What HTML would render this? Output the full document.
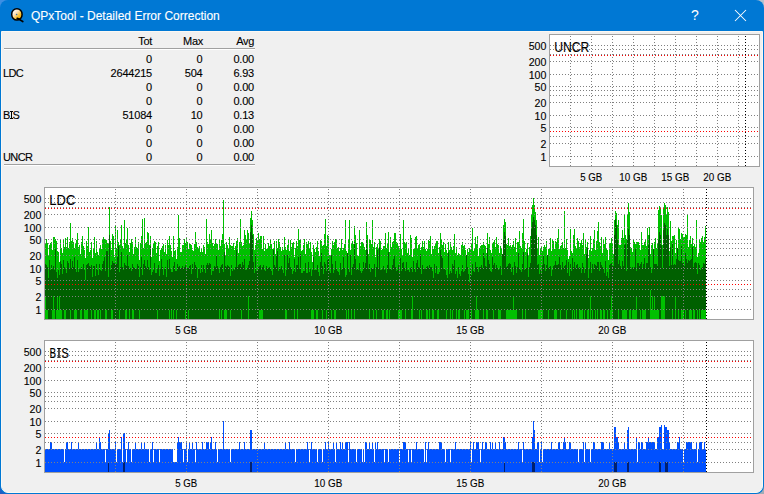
<!DOCTYPE html>
<html><head><meta charset="utf-8"><style>
html,body{margin:0;padding:0;width:764px;height:494px;overflow:hidden;background:#7f94a8;position:relative}
.cn{position:absolute;width:382px;height:247px}
#win{position:absolute;left:0;top:0;width:764px;height:494px;background:#0078d4;border-radius:8px;overflow:hidden;}
#client{position:absolute;left:1px;top:31px;width:762px;height:462px;background:#f0f0f0;border:1px solid #fbf8f3;box-sizing:border-box;border-radius:0 0 7px 7px;}
.tx{position:absolute;font-family:"Liberation Sans", sans-serif;font-size:11px;line-height:12px;color:#000;white-space:nowrap;-webkit-text-stroke:0.12px #000;}
.title{position:absolute;left:31px;top:8px;font-family:"Liberation Sans", sans-serif;font-size:12px;line-height:16px;color:#fff;white-space:nowrap;letter-spacing:0px;-webkit-text-stroke:0.12px #fff}
svg text{stroke:#000;stroke-width:0.12px}
.hl{position:absolute;left:4px;width:251px;height:1px;background:#a0a0a0;border-bottom:1px solid #fff}
</style></head><body>
<div class="cn" style="left:0;top:0;background:#3d8fe3"></div><div class="cn" style="left:382px;top:0;background:#b4c2cf"></div><div class="cn" style="left:0;top:247px;background:#1f5fc4"></div><div class="cn" style="left:382px;top:247px;background:#a3acb5"></div>
<div id="win">
<svg width="30" height="30" style="position:absolute;left:0;top:0">
<defs><linearGradient id="g" x1="0.2" y1="0.1" x2="0.85" y2="0.8"><stop offset="0" stop-color="#ffffff"/><stop offset="0.35" stop-color="#fbe3c0"/><stop offset="0.7" stop-color="#f9c23a"/><stop offset="1" stop-color="#f2b000"/></linearGradient></defs>
<ellipse cx="16.9" cy="14.4" rx="5.2" ry="5.7" fill="url(#g)" stroke="#000" stroke-width="1.5"/>
<circle cx="16.6" cy="14.5" r="0.8" fill="#3a6fa8"/>
<path d="M17.2 18.3 Q19.5 18.8 20.5 20.2 L22.8 21.6" stroke="#000" stroke-width="1.7" fill="none" stroke-linecap="round"/>
</svg>
<div class="title">QPxTool - Detailed Error Correction</div>
<div style="position:absolute;left:691px;top:7px;font-family:'Liberation Sans',sans-serif;font-size:14px;line-height:16px;color:#fff">?</div>
<svg width="14" height="14" style="position:absolute;left:734px;top:9px"><path d="M1 1L12 12M12 1L1 12" stroke="#fff" stroke-width="1.05"/></svg>
<div id="client"></div>
<div class="hl" style="top:48px"></div>
<div class="hl" style="top:164px"></div>
<span class="tx" style="right:612px;top:35px;letter-spacing:-0.3px">Tot</span>
<span class="tx" style="right:561px;top:35px;letter-spacing:-0.3px">Max</span>
<span class="tx" style="right:510px;top:35px;letter-spacing:-0.3px">Avg</span>
<span class="tx" style="right:612px;top:53px;letter-spacing:-0.2px">0</span>
<span class="tx" style="right:561.5px;top:53px;letter-spacing:-0.2px">0</span>
<span class="tx" style="right:510px;top:53px;letter-spacing:-0.2px">0.00</span>
<span class="tx" style="left:3px;top:67px;letter-spacing:-0.6px">LDC</span>
<span class="tx" style="right:612px;top:67px;letter-spacing:-0.2px">2644215</span>
<span class="tx" style="right:561.5px;top:67px;letter-spacing:-0.2px">504</span>
<span class="tx" style="right:510px;top:67px;letter-spacing:-0.2px">6.93</span>
<span class="tx" style="right:612px;top:81px;letter-spacing:-0.2px">0</span>
<span class="tx" style="right:561.5px;top:81px;letter-spacing:-0.2px">0</span>
<span class="tx" style="right:510px;top:81px;letter-spacing:-0.2px">0.00</span>
<span class="tx" style="right:612px;top:95px;letter-spacing:-0.2px">0</span>
<span class="tx" style="right:561.5px;top:95px;letter-spacing:-0.2px">0</span>
<span class="tx" style="right:510px;top:95px;letter-spacing:-0.2px">0.00</span>
<span class="tx" style="left:3px;top:109px;letter-spacing:0px">B</span>
<span class="tx" style="left:12.6px;top:109px;letter-spacing:0px">S</span>
<div style="position:absolute;left:10px;top:111px;width:3px;height:1px;background:#000"></div>
<div style="position:absolute;left:11px;top:111px;width:1.2px;height:8px;background:#000"></div>
<div style="position:absolute;left:10px;top:118px;width:3px;height:1px;background:#000"></div>
<span class="tx" style="right:612px;top:109px;letter-spacing:-0.2px">51084</span>
<span class="tx" style="right:561.5px;top:109px;letter-spacing:-0.2px">10</span>
<span class="tx" style="right:510px;top:109px;letter-spacing:-0.2px">0.13</span>
<span class="tx" style="right:612px;top:123px;letter-spacing:-0.2px">0</span>
<span class="tx" style="right:561.5px;top:123px;letter-spacing:-0.2px">0</span>
<span class="tx" style="right:510px;top:123px;letter-spacing:-0.2px">0.00</span>
<span class="tx" style="right:612px;top:137px;letter-spacing:-0.2px">0</span>
<span class="tx" style="right:561.5px;top:137px;letter-spacing:-0.2px">0</span>
<span class="tx" style="right:510px;top:137px;letter-spacing:-0.2px">0.00</span>
<span class="tx" style="left:3px;top:151px;letter-spacing:-0.6px">UNCR</span>
<span class="tx" style="right:612px;top:151px;letter-spacing:-0.2px">0</span>
<span class="tx" style="right:561.5px;top:151px;letter-spacing:-0.2px">0</span>
<span class="tx" style="right:510px;top:151px;letter-spacing:-0.2px">0.00</span>
<svg width="764" height="494" style="position:absolute;left:0;top:0" font-family='"Liberation Sans", sans-serif' font-size="11" shape-rendering="crispEdges">
<rect x="549.5" y="34.5" width="210" height="132" fill="#fff" stroke="#a0a0a0"/>
<line x1="550" y1="45.5" x2="759" y2="45.5" stroke="#808080" stroke-dasharray="1 2"/>
<line x1="550" y1="49.5" x2="759" y2="49.5" stroke="#808080" stroke-dasharray="1 2"/>
<line x1="550" y1="54.5" x2="759" y2="54.5" stroke="#808080" stroke-dasharray="1 2"/>
<line x1="550" y1="61.5" x2="759" y2="61.5" stroke="#808080" stroke-dasharray="1 2"/>
<line x1="550" y1="74.5" x2="759" y2="74.5" stroke="#808080" stroke-dasharray="1 2"/>
<line x1="550" y1="86.5" x2="759" y2="86.5" stroke="#808080" stroke-dasharray="1 2"/>
<line x1="550" y1="90.5" x2="759" y2="90.5" stroke="#808080" stroke-dasharray="1 2"/>
<line x1="550" y1="95.5" x2="759" y2="95.5" stroke="#808080" stroke-dasharray="1 2"/>
<line x1="550" y1="102.5" x2="759" y2="102.5" stroke="#808080" stroke-dasharray="1 2"/>
<line x1="550" y1="115.5" x2="759" y2="115.5" stroke="#808080" stroke-dasharray="1 2"/>
<line x1="550" y1="127.5" x2="759" y2="127.5" stroke="#808080" stroke-dasharray="1 2"/>
<line x1="550" y1="136.5" x2="759" y2="136.5" stroke="#808080" stroke-dasharray="1 2"/>
<line x1="550" y1="143.5" x2="759" y2="143.5" stroke="#808080" stroke-dasharray="1 2"/>
<line x1="550" y1="156.5" x2="759" y2="156.5" stroke="#808080" stroke-dasharray="1 2"/>
<line x1="570.5" y1="36" x2="570.5" y2="166" stroke="#808080" stroke-dasharray="1 2"/>
<line x1="591.5" y1="36" x2="591.5" y2="166" stroke="#808080" stroke-dasharray="1 2"/>
<line x1="612.5" y1="36" x2="612.5" y2="166" stroke="#808080" stroke-dasharray="1 2"/>
<line x1="633.5" y1="36" x2="633.5" y2="166" stroke="#808080" stroke-dasharray="1 2"/>
<line x1="654.5" y1="36" x2="654.5" y2="166" stroke="#808080" stroke-dasharray="1 2"/>
<line x1="675.5" y1="36" x2="675.5" y2="166" stroke="#808080" stroke-dasharray="1 2"/>
<line x1="696.5" y1="36" x2="696.5" y2="166" stroke="#808080" stroke-dasharray="1 2"/>
<line x1="717.5" y1="36" x2="717.5" y2="166" stroke="#808080" stroke-dasharray="1 2"/>
<line x1="738.5" y1="36" x2="738.5" y2="166" stroke="#808080" stroke-dasharray="1 2"/>
<line x1="550" y1="55.5" x2="759" y2="55.5" stroke="#ff0000" stroke-dasharray="1 2"/>
<line x1="550" y1="131.5" x2="759" y2="131.5" stroke="#ff0000" stroke-dasharray="1 2"/>
<line x1="745.5" y1="36" x2="745.5" y2="166" stroke="#000" stroke-dasharray="1 2"/>
<text x="546.4" y="50" text-anchor="end" textLength="17.7" lengthAdjust="spacingAndGlyphs">500</text>
<text x="546.4" y="66" text-anchor="end" textLength="17.7" lengthAdjust="spacingAndGlyphs">200</text>
<text x="546.4" y="79" text-anchor="end" textLength="17.7" lengthAdjust="spacingAndGlyphs">100</text>
<text x="546.4" y="91" text-anchor="end" textLength="11.8" lengthAdjust="spacingAndGlyphs">50</text>
<text x="546.4" y="107" text-anchor="end" textLength="11.8" lengthAdjust="spacingAndGlyphs">20</text>
<text x="546.4" y="120" text-anchor="end" textLength="11.8" lengthAdjust="spacingAndGlyphs">10</text>
<text x="546.4" y="132" text-anchor="end" textLength="5.9" lengthAdjust="spacingAndGlyphs">5</text>
<text x="546.4" y="148" text-anchor="end" textLength="5.9" lengthAdjust="spacingAndGlyphs">2</text>
<text x="546.4" y="161" text-anchor="end" textLength="5.9" lengthAdjust="spacingAndGlyphs">1</text>
<text x="554.3" y="51.8" font-size="14" textLength="35" lengthAdjust="spacingAndGlyphs">UNCR</text>
<text x="591.3" y="181" text-anchor="middle" textLength="22" lengthAdjust="spacingAndGlyphs">5 GB</text>
<text x="633.3" y="181" text-anchor="middle" textLength="28" lengthAdjust="spacingAndGlyphs">10 GB</text>
<text x="675.3" y="181" text-anchor="middle" textLength="28" lengthAdjust="spacingAndGlyphs">15 GB</text>
<text x="717.3" y="181" text-anchor="middle" textLength="28" lengthAdjust="spacingAndGlyphs">20 GB</text>
<rect x="44.5" y="187.5" width="709" height="132" fill="#fff" stroke="#a0a0a0"/>
<path fill="#00c000" d="M45 243h1v76h-1zM46 239h1v80h-1zM47 243h1v76h-1zM48 255h1v64h-1zM49 245h1v74h-1zM50 243h1v76h-1zM51 242h1v77h-1zM52 250h1v69h-1zM53 237h1v82h-1zM54 237h1v82h-1zM55 239h1v80h-1zM56 241h1v78h-1zM57 251h1v68h-1zM58 252h1v67h-1zM59 262h1v57h-1zM60 239h1v80h-1zM61 248h1v71h-1zM62 253h1v66h-1zM63 239h1v80h-1zM64 247h1v72h-1zM65 238h1v81h-1zM66 247h1v72h-1zM67 237h1v82h-1zM68 248h1v71h-1zM69 242h1v77h-1zM70 223h1v96h-1zM71 241h1v78h-1zM72 238h1v81h-1zM73 242h1v77h-1zM74 248h1v71h-1zM75 243h1v76h-1zM76 240h1v79h-1zM77 233h1v86h-1zM78 247h1v72h-1zM79 245h1v74h-1zM80 254h1v65h-1zM81 242h1v77h-1zM82 236h1v83h-1zM83 246h1v73h-1zM84 250h1v69h-1zM85 258h1v61h-1zM86 241h1v78h-1zM87 246h1v73h-1zM88 227h1v92h-1zM89 252h1v67h-1zM90 250h1v69h-1zM91 242h1v77h-1zM92 258h1v61h-1zM93 249h1v70h-1zM94 237h1v82h-1zM95 253h1v66h-1zM96 241h1v78h-1zM97 252h1v67h-1zM98 255h1v64h-1zM99 248h1v71h-1zM100 245h1v74h-1zM101 249h1v70h-1zM102 239h1v80h-1zM103 237h1v82h-1zM104 239h1v80h-1zM105 240h1v79h-1zM106 240h1v79h-1zM107 243h1v76h-1zM108 243h1v76h-1zM109 207h1v112h-1zM110 241h1v78h-1zM111 250h1v69h-1zM112 234h1v85h-1zM113 236h1v83h-1zM114 257h1v62h-1zM115 225h1v94h-1zM116 248h1v71h-1zM117 230h1v89h-1zM118 242h1v77h-1zM119 245h1v74h-1zM120 240h1v79h-1zM121 225h1v94h-1zM122 246h1v73h-1zM123 249h1v70h-1zM124 220h1v99h-1zM125 243h1v76h-1zM126 239h1v80h-1zM127 228h1v91h-1zM128 245h1v74h-1zM129 252h1v67h-1zM130 243h1v76h-1zM131 239h1v80h-1zM132 242h1v77h-1zM133 254h1v65h-1zM134 247h1v72h-1zM135 237h1v82h-1zM136 247h1v72h-1zM137 248h1v71h-1zM138 242h1v77h-1zM139 260h1v59h-1zM140 243h1v76h-1zM141 236h1v83h-1zM142 219h1v100h-1zM143 248h1v71h-1zM144 218h1v101h-1zM145 243h1v76h-1zM146 242h1v77h-1zM147 232h1v87h-1zM148 233h1v86h-1zM149 245h1v74h-1zM150 236h1v83h-1zM151 257h1v62h-1zM152 248h1v71h-1zM153 243h1v76h-1zM154 241h1v78h-1zM155 242h1v77h-1zM156 253h1v66h-1zM157 246h1v73h-1zM158 242h1v77h-1zM159 261h1v58h-1zM160 250h1v69h-1zM161 248h1v71h-1zM162 246h1v73h-1zM163 244h1v75h-1zM164 252h1v67h-1zM165 245h1v74h-1zM166 254h1v65h-1zM167 240h1v79h-1zM168 245h1v74h-1zM169 236h1v83h-1zM170 245h1v74h-1zM171 251h1v68h-1zM172 257h1v62h-1zM173 236h1v83h-1zM174 251h1v68h-1zM175 250h1v69h-1zM176 259h1v60h-1zM177 247h1v72h-1zM178 215h1v104h-1zM179 238h1v81h-1zM180 252h1v67h-1zM181 252h1v67h-1zM182 245h1v74h-1zM183 245h1v74h-1zM184 239h1v80h-1zM185 243h1v76h-1zM186 237h1v82h-1zM187 242h1v77h-1zM188 249h1v70h-1zM189 244h1v75h-1zM190 244h1v75h-1zM191 245h1v74h-1zM192 250h1v69h-1zM193 251h1v68h-1zM194 244h1v75h-1zM195 232h1v87h-1zM196 242h1v77h-1zM197 247h1v72h-1zM198 248h1v71h-1zM199 246h1v73h-1zM200 252h1v67h-1zM201 249h1v70h-1zM202 252h1v67h-1zM203 245h1v74h-1zM204 247h1v72h-1zM205 254h1v65h-1zM206 219h1v100h-1zM207 242h1v77h-1zM208 244h1v75h-1zM209 234h1v85h-1zM210 240h1v79h-1zM211 230h1v89h-1zM212 243h1v76h-1zM213 246h1v73h-1zM214 244h1v75h-1zM215 239h1v80h-1zM216 244h1v75h-1zM217 244h1v75h-1zM218 250h1v69h-1zM219 240h1v79h-1zM220 246h1v73h-1zM221 240h1v79h-1zM222 234h1v85h-1zM223 200h1v119h-1zM224 244h1v75h-1zM225 256h1v63h-1zM226 242h1v77h-1zM227 245h1v74h-1zM228 248h1v71h-1zM229 237h1v82h-1zM230 245h1v74h-1zM231 246h1v73h-1zM232 246h1v73h-1zM233 243h1v76h-1zM234 250h1v69h-1zM235 246h1v73h-1zM236 241h1v78h-1zM237 238h1v81h-1zM238 253h1v66h-1zM239 242h1v77h-1zM240 219h1v100h-1zM241 242h1v77h-1zM242 246h1v73h-1zM243 245h1v74h-1zM244 230h1v89h-1zM245 235h1v84h-1zM246 240h1v79h-1zM247 230h1v89h-1zM248 233h1v86h-1zM249 243h1v76h-1zM250 218h1v101h-1zM251 211h1v108h-1zM252 220h1v99h-1zM253 234h1v85h-1zM254 250h1v69h-1zM255 245h1v74h-1zM256 238h1v81h-1zM257 241h1v78h-1zM258 233h1v86h-1zM259 239h1v80h-1zM260 236h1v83h-1zM261 236h1v83h-1zM262 249h1v70h-1zM263 236h1v83h-1zM264 251h1v68h-1zM265 244h1v75h-1zM266 249h1v70h-1zM267 249h1v70h-1zM268 243h1v76h-1zM269 246h1v73h-1zM270 239h1v80h-1zM271 244h1v75h-1zM272 249h1v70h-1zM273 249h1v70h-1zM274 241h1v78h-1zM275 254h1v65h-1zM276 241h1v78h-1zM277 248h1v71h-1zM278 239h1v80h-1zM279 242h1v77h-1zM280 247h1v72h-1zM281 251h1v68h-1zM282 247h1v72h-1zM283 250h1v69h-1zM284 237h1v82h-1zM285 247h1v72h-1zM286 250h1v69h-1zM287 245h1v74h-1zM288 239h1v80h-1zM289 251h1v68h-1zM290 240h1v79h-1zM291 247h1v72h-1zM292 243h1v76h-1zM293 242h1v77h-1zM294 257h1v62h-1zM295 248h1v71h-1zM296 241h1v78h-1zM297 246h1v73h-1zM298 229h1v90h-1zM299 240h1v79h-1zM300 239h1v80h-1zM301 251h1v68h-1zM302 250h1v69h-1zM303 245h1v74h-1zM304 239h1v80h-1zM305 254h1v65h-1zM306 242h1v77h-1zM307 244h1v75h-1zM308 241h1v78h-1zM309 249h1v70h-1zM310 242h1v77h-1zM311 252h1v67h-1zM312 262h1v57h-1zM313 245h1v74h-1zM314 249h1v70h-1zM315 252h1v67h-1zM316 247h1v72h-1zM317 241h1v78h-1zM318 251h1v68h-1zM319 256h1v63h-1zM320 240h1v79h-1zM321 241h1v78h-1zM322 246h1v73h-1zM323 245h1v74h-1zM324 234h1v85h-1zM325 219h1v100h-1zM326 246h1v73h-1zM327 235h1v84h-1zM328 236h1v83h-1zM329 255h1v64h-1zM330 255h1v64h-1zM331 249h1v70h-1zM332 241h1v78h-1zM333 245h1v74h-1zM334 242h1v77h-1zM335 239h1v80h-1zM336 239h1v80h-1zM337 248h1v71h-1zM338 247h1v72h-1zM339 251h1v68h-1zM340 248h1v71h-1zM341 239h1v80h-1zM342 250h1v69h-1zM343 248h1v71h-1zM344 244h1v75h-1zM345 220h1v99h-1zM346 251h1v68h-1zM347 253h1v66h-1zM348 239h1v80h-1zM349 220h1v99h-1zM350 250h1v69h-1zM351 243h1v76h-1zM352 241h1v78h-1zM353 244h1v75h-1zM354 226h1v93h-1zM355 235h1v84h-1zM356 243h1v76h-1zM357 255h1v64h-1zM358 256h1v63h-1zM359 230h1v89h-1zM360 246h1v73h-1zM361 242h1v77h-1zM362 242h1v77h-1zM363 244h1v75h-1zM364 247h1v72h-1zM365 250h1v69h-1zM366 222h1v97h-1zM367 235h1v84h-1zM368 254h1v65h-1zM369 240h1v79h-1zM370 240h1v79h-1zM371 244h1v75h-1zM372 220h1v99h-1zM373 247h1v72h-1zM374 242h1v77h-1zM375 257h1v62h-1zM376 247h1v72h-1zM377 244h1v75h-1zM378 249h1v70h-1zM379 239h1v80h-1zM380 241h1v78h-1zM381 250h1v69h-1zM382 249h1v70h-1zM383 246h1v73h-1zM384 246h1v73h-1zM385 233h1v86h-1zM386 248h1v71h-1zM387 243h1v76h-1zM388 232h1v87h-1zM389 252h1v67h-1zM390 237h1v82h-1zM391 247h1v72h-1zM392 242h1v77h-1zM393 241h1v78h-1zM394 233h1v86h-1zM395 233h1v86h-1zM396 242h1v77h-1zM397 243h1v76h-1zM398 246h1v73h-1zM399 248h1v71h-1zM400 234h1v85h-1zM401 249h1v70h-1zM402 255h1v64h-1zM403 220h1v99h-1zM404 242h1v77h-1zM405 244h1v75h-1zM406 242h1v77h-1zM407 253h1v66h-1zM408 249h1v70h-1zM409 255h1v64h-1zM410 235h1v84h-1zM411 238h1v81h-1zM412 257h1v62h-1zM413 249h1v70h-1zM414 249h1v70h-1zM415 237h1v82h-1zM416 236h1v83h-1zM417 249h1v70h-1zM418 245h1v74h-1zM419 244h1v75h-1zM420 250h1v69h-1zM421 247h1v72h-1zM422 241h1v78h-1zM423 247h1v72h-1zM424 241h1v78h-1zM425 249h1v70h-1zM426 251h1v68h-1zM427 249h1v70h-1zM428 240h1v79h-1zM429 241h1v78h-1zM430 236h1v83h-1zM431 254h1v65h-1zM432 246h1v73h-1zM433 249h1v70h-1zM434 246h1v73h-1zM435 244h1v75h-1zM436 241h1v78h-1zM437 241h1v78h-1zM438 253h1v66h-1zM439 247h1v72h-1zM440 233h1v86h-1zM441 240h1v79h-1zM442 245h1v74h-1zM443 242h1v77h-1zM444 252h1v67h-1zM445 244h1v75h-1zM446 250h1v69h-1zM447 253h1v66h-1zM448 242h1v77h-1zM449 250h1v69h-1zM450 242h1v77h-1zM451 247h1v72h-1zM452 250h1v69h-1zM453 246h1v73h-1zM454 234h1v85h-1zM455 253h1v66h-1zM456 247h1v72h-1zM457 255h1v64h-1zM458 253h1v66h-1zM459 254h1v65h-1zM460 255h1v64h-1zM461 245h1v74h-1zM462 242h1v77h-1zM463 246h1v73h-1zM464 245h1v74h-1zM465 250h1v69h-1zM466 255h1v64h-1zM467 249h1v70h-1zM468 252h1v67h-1zM469 248h1v71h-1zM470 250h1v69h-1zM471 244h1v75h-1zM472 228h1v91h-1zM473 251h1v68h-1zM474 249h1v70h-1zM475 237h1v82h-1zM476 244h1v75h-1zM477 236h1v83h-1zM478 256h1v63h-1zM479 248h1v71h-1zM480 246h1v73h-1zM481 245h1v74h-1zM482 245h1v74h-1zM483 242h1v77h-1zM484 245h1v74h-1zM485 246h1v73h-1zM486 253h1v66h-1zM487 233h1v86h-1zM488 244h1v75h-1zM489 237h1v82h-1zM490 250h1v69h-1zM491 253h1v66h-1zM492 243h1v76h-1zM493 242h1v77h-1zM494 240h1v79h-1zM495 247h1v72h-1zM496 237h1v82h-1zM497 244h1v75h-1zM498 245h1v74h-1zM499 253h1v66h-1zM500 246h1v73h-1zM501 248h1v71h-1zM502 254h1v65h-1zM503 225h1v94h-1zM504 219h1v100h-1zM505 222h1v97h-1zM506 244h1v75h-1zM507 245h1v74h-1zM508 238h1v81h-1zM509 246h1v73h-1zM510 245h1v74h-1zM511 247h1v72h-1zM512 245h1v74h-1zM513 241h1v78h-1zM514 247h1v72h-1zM515 238h1v81h-1zM516 252h1v67h-1zM517 242h1v77h-1zM518 242h1v77h-1zM519 231h1v88h-1zM520 246h1v73h-1zM521 248h1v71h-1zM522 233h1v86h-1zM523 219h1v100h-1zM524 241h1v78h-1zM525 252h1v67h-1zM526 249h1v70h-1zM527 243h1v76h-1zM528 255h1v64h-1zM529 247h1v72h-1zM530 236h1v83h-1zM531 215h1v104h-1zM532 205h1v114h-1zM533 198h1v121h-1zM534 205h1v114h-1zM535 212h1v107h-1zM536 220h1v99h-1zM537 248h1v71h-1zM538 237h1v82h-1zM539 255h1v64h-1zM540 248h1v71h-1zM541 247h1v72h-1zM542 251h1v68h-1zM543 247h1v72h-1zM544 245h1v74h-1zM545 247h1v72h-1zM546 241h1v78h-1zM547 255h1v64h-1zM548 249h1v70h-1zM549 248h1v71h-1zM550 238h1v81h-1zM551 251h1v68h-1zM552 239h1v80h-1zM553 241h1v78h-1zM554 249h1v70h-1zM555 241h1v78h-1zM556 242h1v77h-1zM557 238h1v81h-1zM558 229h1v90h-1zM559 249h1v70h-1zM560 246h1v73h-1zM561 245h1v74h-1zM562 242h1v77h-1zM563 248h1v71h-1zM564 211h1v108h-1zM565 248h1v71h-1zM566 239h1v80h-1zM567 250h1v69h-1zM568 259h1v60h-1zM569 256h1v63h-1zM570 229h1v90h-1zM571 251h1v68h-1zM572 253h1v66h-1zM573 235h1v84h-1zM574 229h1v90h-1zM575 246h1v73h-1zM576 249h1v70h-1zM577 238h1v81h-1zM578 241h1v78h-1zM579 247h1v72h-1zM580 243h1v76h-1zM581 240h1v79h-1zM582 245h1v74h-1zM583 233h1v86h-1zM584 254h1v65h-1zM585 239h1v80h-1zM586 247h1v72h-1zM587 242h1v77h-1zM588 258h1v61h-1zM589 250h1v69h-1zM590 236h1v83h-1zM591 251h1v68h-1zM592 248h1v71h-1zM593 239h1v80h-1zM594 230h1v89h-1zM595 250h1v69h-1zM596 241h1v78h-1zM597 231h1v88h-1zM598 222h1v97h-1zM599 242h1v77h-1zM600 246h1v73h-1zM601 237h1v82h-1zM602 253h1v66h-1zM603 240h1v79h-1zM604 244h1v75h-1zM605 237h1v82h-1zM606 248h1v71h-1zM607 250h1v69h-1zM608 260h1v59h-1zM609 243h1v76h-1zM610 243h1v76h-1zM611 238h1v81h-1zM612 243h1v76h-1zM613 254h1v65h-1zM614 220h1v99h-1zM615 211h1v108h-1zM616 213h1v106h-1zM617 225h1v94h-1zM618 220h1v99h-1zM619 245h1v74h-1zM620 245h1v74h-1zM621 238h1v81h-1zM622 230h1v89h-1zM623 238h1v81h-1zM624 215h1v104h-1zM625 235h1v84h-1zM626 239h1v80h-1zM627 215h1v104h-1zM628 203h1v116h-1zM629 212h1v107h-1zM630 247h1v72h-1zM631 248h1v71h-1zM632 252h1v67h-1zM633 240h1v79h-1zM634 242h1v77h-1zM635 244h1v75h-1zM636 242h1v77h-1zM637 242h1v77h-1zM638 242h1v77h-1zM639 245h1v74h-1zM640 250h1v69h-1zM641 232h1v87h-1zM642 245h1v74h-1zM643 245h1v74h-1zM644 242h1v77h-1zM645 239h1v80h-1zM646 246h1v73h-1zM647 228h1v91h-1zM648 235h1v84h-1zM649 227h1v92h-1zM650 254h1v65h-1zM651 245h1v74h-1zM652 243h1v76h-1zM653 249h1v70h-1zM654 242h1v77h-1zM655 238h1v81h-1zM656 248h1v71h-1zM657 244h1v75h-1zM658 210h1v109h-1zM659 206h1v113h-1zM660 208h1v111h-1zM661 215h1v104h-1zM662 245h1v74h-1zM663 207h1v112h-1zM664 203h1v116h-1zM665 205h1v114h-1zM666 215h1v104h-1zM667 207h1v112h-1zM668 212h1v107h-1zM669 251h1v68h-1zM670 221h1v98h-1zM671 241h1v78h-1zM672 236h1v83h-1zM673 236h1v83h-1zM674 235h1v84h-1zM675 253h1v66h-1zM676 240h1v79h-1zM677 248h1v71h-1zM678 227h1v92h-1zM679 229h1v90h-1zM680 239h1v80h-1zM681 233h1v86h-1zM682 234h1v85h-1zM683 238h1v81h-1zM684 237h1v82h-1zM685 234h1v85h-1zM686 235h1v84h-1zM687 215h1v104h-1zM688 247h1v72h-1zM689 240h1v79h-1zM690 236h1v83h-1zM691 244h1v75h-1zM692 238h1v81h-1zM693 246h1v73h-1zM694 244h1v75h-1zM695 247h1v72h-1zM696 220h1v99h-1zM697 257h1v62h-1zM698 253h1v66h-1zM699 239h1v80h-1zM700 242h1v77h-1zM701 238h1v81h-1zM702 236h1v83h-1zM703 242h1v77h-1zM704 237h1v82h-1zM705 226h1v93h-1z"/>
<path fill="#006000" d="M45 264h1v55h-1zM46 265h1v54h-1zM47 267h1v52h-1zM48 278h1v41h-1zM49 260h1v59h-1zM50 270h1v49h-1zM51 265h1v54h-1zM52 269h1v50h-1zM53 266h1v53h-1zM54 270h1v49h-1zM55 249h1v70h-1zM56 272h1v47h-1zM57 278h1v41h-1zM58 270h1v49h-1zM59 275h1v44h-1zM60 261h1v58h-1zM61 264h1v55h-1zM62 274h1v45h-1zM63 260h1v59h-1zM64 267h1v52h-1zM65 269h1v50h-1zM66 273h1v46h-1zM67 261h1v58h-1zM68 263h1v56h-1zM69 268h1v51h-1zM70 259h1v60h-1zM71 268h1v51h-1zM72 261h1v58h-1zM73 267h1v52h-1zM74 257h1v62h-1zM75 268h1v51h-1zM76 272h1v47h-1zM77 260h1v59h-1zM78 272h1v47h-1zM79 269h1v50h-1zM80 269h1v50h-1zM81 267h1v52h-1zM82 269h1v50h-1zM83 264h1v55h-1zM84 270h1v49h-1zM85 280h1v39h-1zM86 265h1v54h-1zM87 264h1v55h-1zM88 263h1v56h-1zM89 266h1v53h-1zM90 267h1v52h-1zM91 265h1v54h-1zM92 277h1v42h-1zM93 266h1v53h-1zM94 266h1v53h-1zM95 276h1v43h-1zM96 264h1v55h-1zM97 270h1v49h-1zM98 275h1v44h-1zM99 264h1v55h-1zM100 270h1v49h-1zM101 271h1v48h-1zM102 264h1v55h-1zM103 261h1v58h-1zM104 257h1v62h-1zM105 271h1v48h-1zM106 251h1v68h-1zM107 251h1v68h-1zM108 277h1v42h-1zM109 235h1v84h-1zM110 270h1v49h-1zM111 265h1v54h-1zM112 261h1v58h-1zM113 263h1v56h-1zM114 263h1v56h-1zM115 265h1v54h-1zM116 264h1v55h-1zM117 257h1v62h-1zM118 246h1v73h-1zM119 272h1v47h-1zM120 267h1v52h-1zM121 252h1v67h-1zM122 267h1v52h-1zM123 270h1v49h-1zM124 263h1v56h-1zM125 265h1v54h-1zM126 266h1v53h-1zM127 255h1v64h-1zM128 266h1v53h-1zM129 268h1v51h-1zM130 268h1v51h-1zM131 271h1v48h-1zM132 264h1v55h-1zM133 267h1v52h-1zM134 268h1v51h-1zM135 269h1v50h-1zM136 269h1v50h-1zM137 264h1v55h-1zM138 266h1v53h-1zM139 277h1v42h-1zM140 267h1v52h-1zM141 257h1v62h-1zM142 275h1v44h-1zM143 264h1v55h-1zM144 260h1v59h-1zM145 266h1v53h-1zM146 268h1v51h-1zM147 260h1v59h-1zM148 267h1v52h-1zM149 270h1v49h-1zM150 246h1v73h-1zM151 275h1v44h-1zM152 272h1v47h-1zM153 270h1v49h-1zM154 263h1v56h-1zM155 273h1v46h-1zM156 273h1v46h-1zM157 269h1v50h-1zM158 265h1v54h-1zM159 276h1v43h-1zM160 269h1v50h-1zM161 259h1v60h-1zM162 267h1v52h-1zM163 275h1v44h-1zM164 269h1v50h-1zM165 267h1v52h-1zM166 277h1v42h-1zM167 260h1v59h-1zM168 269h1v50h-1zM169 259h1v60h-1zM170 269h1v50h-1zM171 272h1v47h-1zM172 272h1v47h-1zM173 266h1v53h-1zM174 262h1v57h-1zM175 271h1v48h-1zM176 271h1v48h-1zM177 264h1v55h-1zM178 267h1v52h-1zM179 266h1v53h-1zM180 269h1v50h-1zM181 268h1v51h-1zM182 266h1v53h-1zM183 268h1v51h-1zM184 267h1v52h-1zM185 265h1v54h-1zM186 270h1v49h-1zM187 268h1v51h-1zM188 268h1v51h-1zM189 266h1v53h-1zM190 265h1v54h-1zM191 274h1v45h-1zM192 264h1v55h-1zM193 269h1v50h-1zM194 262h1v57h-1zM195 265h1v54h-1zM196 267h1v52h-1zM197 278h1v41h-1zM198 268h1v51h-1zM199 269h1v50h-1zM200 273h1v46h-1zM201 265h1v54h-1zM202 272h1v47h-1zM203 265h1v54h-1zM204 269h1v50h-1zM205 273h1v46h-1zM206 265h1v54h-1zM207 263h1v56h-1zM208 265h1v54h-1zM209 263h1v56h-1zM210 264h1v55h-1zM211 275h1v44h-1zM212 271h1v48h-1zM213 271h1v48h-1zM214 266h1v53h-1zM215 267h1v52h-1zM216 256h1v63h-1zM217 266h1v53h-1zM218 269h1v50h-1zM219 273h1v46h-1zM220 267h1v52h-1zM221 265h1v54h-1zM222 264h1v55h-1zM223 272h1v47h-1zM224 252h1v67h-1zM225 266h1v53h-1zM226 267h1v52h-1zM227 265h1v54h-1zM228 266h1v53h-1zM229 267h1v52h-1zM230 276h1v43h-1zM231 265h1v54h-1zM232 271h1v48h-1zM233 269h1v50h-1zM234 270h1v49h-1zM235 267h1v52h-1zM236 250h1v69h-1zM237 267h1v52h-1zM238 265h1v54h-1zM239 264h1v55h-1zM240 264h1v55h-1zM241 267h1v52h-1zM242 262h1v57h-1zM243 265h1v54h-1zM244 259h1v60h-1zM245 270h1v49h-1zM246 270h1v49h-1zM247 268h1v51h-1zM248 265h1v54h-1zM249 261h1v58h-1zM250 232h1v87h-1zM251 225h1v94h-1zM252 235h1v84h-1zM253 262h1v57h-1zM254 273h1v46h-1zM255 254h1v65h-1zM256 271h1v48h-1zM257 270h1v49h-1zM258 267h1v52h-1zM259 266h1v53h-1zM260 265h1v54h-1zM261 270h1v49h-1zM262 267h1v52h-1zM263 265h1v54h-1zM264 270h1v49h-1zM265 271h1v48h-1zM266 266h1v53h-1zM267 268h1v51h-1zM268 268h1v51h-1zM269 267h1v52h-1zM270 269h1v50h-1zM271 271h1v48h-1zM272 275h1v44h-1zM273 250h1v69h-1zM274 265h1v54h-1zM275 267h1v52h-1zM276 255h1v64h-1zM277 251h1v68h-1zM278 271h1v48h-1zM279 267h1v52h-1zM280 269h1v50h-1zM281 266h1v53h-1zM282 270h1v49h-1zM283 273h1v46h-1zM284 255h1v64h-1zM285 276h1v43h-1zM286 270h1v49h-1zM287 255h1v64h-1zM288 263h1v56h-1zM289 258h1v61h-1zM290 267h1v52h-1zM291 269h1v50h-1zM292 274h1v45h-1zM293 271h1v48h-1zM294 259h1v60h-1zM295 272h1v47h-1zM296 265h1v54h-1zM297 265h1v54h-1zM298 257h1v62h-1zM299 269h1v50h-1zM300 254h1v65h-1zM301 273h1v46h-1zM302 273h1v46h-1zM303 271h1v48h-1zM304 271h1v48h-1zM305 263h1v56h-1zM306 273h1v46h-1zM307 273h1v46h-1zM308 262h1v57h-1zM309 272h1v47h-1zM310 269h1v50h-1zM311 276h1v43h-1zM312 270h1v49h-1zM313 257h1v62h-1zM314 270h1v49h-1zM315 270h1v49h-1zM316 270h1v49h-1zM317 265h1v54h-1zM318 272h1v47h-1zM319 276h1v43h-1zM320 262h1v57h-1zM321 253h1v66h-1zM322 266h1v53h-1zM323 274h1v45h-1zM324 262h1v57h-1zM325 264h1v55h-1zM326 271h1v48h-1zM327 260h1v59h-1zM328 259h1v60h-1zM329 271h1v48h-1zM330 273h1v46h-1zM331 255h1v64h-1zM332 264h1v55h-1zM333 273h1v46h-1zM334 270h1v49h-1zM335 261h1v58h-1zM336 268h1v51h-1zM337 271h1v48h-1zM338 272h1v47h-1zM339 275h1v44h-1zM340 263h1v56h-1zM341 270h1v49h-1zM342 268h1v51h-1zM343 257h1v62h-1zM344 268h1v51h-1zM345 277h1v42h-1zM346 275h1v44h-1zM347 253h1v66h-1zM348 269h1v50h-1zM349 272h1v47h-1zM350 255h1v64h-1zM351 275h1v44h-1zM352 267h1v52h-1zM353 264h1v55h-1zM354 242h1v77h-1zM355 259h1v60h-1zM356 270h1v49h-1zM357 268h1v51h-1zM358 270h1v49h-1zM359 263h1v56h-1zM360 271h1v48h-1zM361 273h1v46h-1zM362 271h1v48h-1zM363 262h1v57h-1zM364 268h1v51h-1zM365 263h1v56h-1zM366 240h1v79h-1zM367 250h1v69h-1zM368 269h1v50h-1zM369 264h1v55h-1zM370 272h1v47h-1zM371 268h1v51h-1zM372 269h1v50h-1zM373 269h1v50h-1zM374 264h1v55h-1zM375 277h1v42h-1zM376 267h1v52h-1zM377 250h1v69h-1zM378 269h1v50h-1zM379 247h1v72h-1zM380 270h1v49h-1zM381 270h1v49h-1zM382 269h1v50h-1zM383 266h1v53h-1zM384 270h1v49h-1zM385 269h1v50h-1zM386 273h1v46h-1zM387 265h1v54h-1zM388 252h1v67h-1zM389 269h1v50h-1zM390 268h1v51h-1zM391 270h1v49h-1zM392 265h1v54h-1zM393 259h1v60h-1zM394 256h1v63h-1zM395 267h1v52h-1zM396 271h1v48h-1zM397 270h1v49h-1zM398 265h1v54h-1zM399 273h1v46h-1zM400 258h1v61h-1zM401 271h1v48h-1zM402 263h1v56h-1zM403 262h1v57h-1zM404 268h1v51h-1zM405 271h1v48h-1zM406 262h1v57h-1zM407 270h1v49h-1zM408 270h1v49h-1zM409 272h1v47h-1zM410 268h1v51h-1zM411 267h1v52h-1zM412 272h1v47h-1zM413 261h1v58h-1zM414 269h1v50h-1zM415 272h1v47h-1zM416 263h1v56h-1zM417 260h1v59h-1zM418 267h1v52h-1zM419 268h1v51h-1zM420 254h1v65h-1zM421 274h1v45h-1zM422 265h1v54h-1zM423 269h1v50h-1zM424 269h1v50h-1zM425 269h1v50h-1zM426 267h1v52h-1zM427 266h1v53h-1zM428 268h1v51h-1zM429 265h1v54h-1zM430 267h1v52h-1zM431 267h1v52h-1zM432 271h1v48h-1zM433 278h1v41h-1zM434 264h1v55h-1zM435 273h1v46h-1zM436 266h1v53h-1zM437 274h1v45h-1zM438 274h1v45h-1zM439 272h1v47h-1zM440 250h1v69h-1zM441 255h1v64h-1zM442 258h1v61h-1zM443 269h1v50h-1zM444 269h1v50h-1zM445 270h1v49h-1zM446 275h1v44h-1zM447 278h1v41h-1zM448 252h1v67h-1zM449 274h1v45h-1zM450 271h1v48h-1zM451 273h1v46h-1zM452 264h1v55h-1zM453 266h1v53h-1zM454 260h1v59h-1zM455 274h1v45h-1zM456 271h1v48h-1zM457 278h1v41h-1zM458 267h1v52h-1zM459 274h1v45h-1zM460 276h1v43h-1zM461 271h1v48h-1zM462 265h1v54h-1zM463 272h1v47h-1zM464 271h1v48h-1zM465 268h1v51h-1zM466 255h1v64h-1zM467 267h1v52h-1zM468 274h1v45h-1zM469 282h1v37h-1zM470 269h1v50h-1zM471 275h1v44h-1zM472 264h1v55h-1zM473 271h1v48h-1zM474 272h1v47h-1zM475 262h1v57h-1zM476 267h1v52h-1zM477 267h1v52h-1zM478 272h1v47h-1zM479 267h1v52h-1zM480 267h1v52h-1zM481 265h1v54h-1zM482 268h1v51h-1zM483 253h1v66h-1zM484 258h1v61h-1zM485 266h1v53h-1zM486 267h1v52h-1zM487 248h1v71h-1zM488 260h1v59h-1zM489 264h1v55h-1zM490 271h1v48h-1zM491 272h1v47h-1zM492 257h1v62h-1zM493 265h1v54h-1zM494 263h1v56h-1zM495 268h1v51h-1zM496 265h1v54h-1zM497 268h1v51h-1zM498 270h1v49h-1zM499 269h1v50h-1zM500 266h1v53h-1zM501 275h1v44h-1zM502 254h1v65h-1zM503 240h1v79h-1zM504 232h1v87h-1zM505 236h1v83h-1zM506 267h1v52h-1zM507 266h1v53h-1zM508 264h1v55h-1zM509 263h1v56h-1zM510 264h1v55h-1zM511 272h1v47h-1zM512 267h1v52h-1zM513 275h1v44h-1zM514 262h1v57h-1zM515 266h1v53h-1zM516 273h1v46h-1zM517 267h1v52h-1zM518 253h1v66h-1zM519 268h1v51h-1zM520 270h1v49h-1zM521 272h1v47h-1zM522 264h1v55h-1zM523 252h1v67h-1zM524 270h1v49h-1zM525 269h1v50h-1zM526 268h1v51h-1zM527 253h1v66h-1zM528 277h1v42h-1zM529 267h1v52h-1zM530 263h1v56h-1zM531 229h1v90h-1zM532 222h1v97h-1zM533 217h1v102h-1zM534 220h1v99h-1zM535 225h1v94h-1zM536 235h1v84h-1zM537 265h1v54h-1zM538 264h1v55h-1zM539 274h1v45h-1zM540 270h1v49h-1zM541 273h1v46h-1zM542 265h1v54h-1zM543 255h1v64h-1zM544 264h1v55h-1zM545 271h1v48h-1zM546 265h1v54h-1zM547 255h1v64h-1zM548 268h1v51h-1zM549 267h1v52h-1zM550 266h1v53h-1zM551 276h1v43h-1zM552 270h1v49h-1zM553 266h1v53h-1zM554 265h1v54h-1zM555 261h1v58h-1zM556 265h1v54h-1zM557 265h1v54h-1zM558 264h1v55h-1zM559 257h1v62h-1zM560 265h1v54h-1zM561 270h1v49h-1zM562 262h1v57h-1zM563 268h1v51h-1zM564 266h1v53h-1zM565 265h1v54h-1zM566 260h1v59h-1zM567 273h1v46h-1zM568 262h1v57h-1zM569 276h1v43h-1zM570 264h1v55h-1zM571 271h1v48h-1zM572 258h1v61h-1zM573 267h1v52h-1zM574 262h1v57h-1zM575 268h1v51h-1zM576 265h1v54h-1zM577 264h1v55h-1zM578 268h1v51h-1zM579 267h1v52h-1zM580 268h1v51h-1zM581 273h1v46h-1zM582 263h1v56h-1zM583 267h1v52h-1zM584 273h1v46h-1zM585 269h1v50h-1zM586 254h1v65h-1zM587 248h1v71h-1zM588 278h1v41h-1zM589 269h1v50h-1zM590 262h1v57h-1zM591 273h1v46h-1zM592 264h1v55h-1zM593 269h1v50h-1zM594 264h1v55h-1zM595 265h1v54h-1zM596 266h1v53h-1zM597 262h1v57h-1zM598 262h1v57h-1zM599 271h1v48h-1zM600 262h1v57h-1zM601 265h1v54h-1zM602 267h1v52h-1zM603 269h1v50h-1zM604 273h1v46h-1zM605 261h1v58h-1zM606 276h1v43h-1zM607 272h1v47h-1zM608 278h1v41h-1zM609 265h1v54h-1zM610 264h1v55h-1zM611 263h1v56h-1zM612 266h1v53h-1zM613 266h1v53h-1zM614 235h1v84h-1zM615 219h1v100h-1zM616 225h1v94h-1zM617 240h1v79h-1zM618 264h1v55h-1zM619 260h1v59h-1zM620 266h1v53h-1zM621 268h1v51h-1zM622 261h1v58h-1zM623 266h1v53h-1zM624 245h1v74h-1zM625 244h1v75h-1zM626 271h1v48h-1zM627 240h1v79h-1zM628 229h1v90h-1zM629 235h1v84h-1zM630 267h1v52h-1zM631 269h1v50h-1zM632 267h1v52h-1zM633 269h1v50h-1zM634 267h1v52h-1zM635 249h1v70h-1zM636 271h1v48h-1zM637 263h1v56h-1zM638 263h1v56h-1zM639 266h1v53h-1zM640 264h1v55h-1zM641 262h1v57h-1zM642 269h1v50h-1zM643 264h1v55h-1zM644 258h1v61h-1zM645 268h1v51h-1zM646 263h1v56h-1zM647 263h1v56h-1zM648 245h1v74h-1zM649 235h1v84h-1zM650 267h1v52h-1zM651 273h1v46h-1zM652 269h1v50h-1zM653 249h1v70h-1zM654 264h1v55h-1zM655 264h1v55h-1zM656 264h1v55h-1zM657 266h1v53h-1zM658 240h1v79h-1zM659 232h1v87h-1zM660 235h1v84h-1zM661 245h1v74h-1zM662 268h1v51h-1zM663 230h1v89h-1zM664 223h1v96h-1zM665 225h1v94h-1zM666 235h1v84h-1zM667 229h1v90h-1zM668 235h1v84h-1zM669 266h1v53h-1zM670 247h1v72h-1zM671 265h1v54h-1zM672 244h1v75h-1zM673 265h1v54h-1zM674 264h1v55h-1zM675 265h1v54h-1zM676 259h1v60h-1zM677 248h1v71h-1zM678 260h1v59h-1zM679 261h1v58h-1zM680 261h1v58h-1zM681 246h1v73h-1zM682 263h1v56h-1zM683 263h1v56h-1zM684 266h1v53h-1zM685 253h1v66h-1zM686 259h1v60h-1zM687 263h1v56h-1zM688 260h1v59h-1zM689 261h1v58h-1zM690 260h1v59h-1zM691 259h1v60h-1zM692 247h1v72h-1zM693 267h1v52h-1zM694 263h1v56h-1zM695 262h1v57h-1zM696 263h1v56h-1zM697 274h1v45h-1zM698 263h1v56h-1zM699 265h1v54h-1zM700 270h1v49h-1zM701 268h1v51h-1zM702 267h1v52h-1zM703 263h1v56h-1zM704 264h1v55h-1zM705 259h1v60h-1z"/>
<path fill="#00c000" d="M45 310h1v9h-1zM46 310h1v9h-1zM47 310h1v9h-1zM52 310h1v9h-1zM53 310h1v9h-1zM54 310h1v9h-1zM56 310h1v9h-1zM57 310h1v9h-1zM58 310h1v9h-1zM59 310h1v9h-1zM60 310h1v9h-1zM61 310h1v9h-1zM64 310h1v9h-1zM65 310h1v9h-1zM70 310h1v9h-1zM74 310h1v9h-1zM75 310h1v9h-1zM76 310h1v9h-1zM80 310h1v9h-1zM81 310h1v9h-1zM84 310h1v9h-1zM85 310h1v9h-1zM86 310h1v9h-1zM87 310h1v9h-1zM91 310h1v9h-1zM94 310h1v9h-1zM95 310h1v9h-1zM97 310h1v9h-1zM98 310h1v9h-1zM100 310h1v9h-1zM105 310h1v9h-1zM106 310h1v9h-1zM111 310h1v9h-1zM112 310h1v9h-1zM119 310h1v9h-1zM125 310h1v9h-1zM126 310h1v9h-1zM129 310h1v9h-1zM132 310h1v9h-1zM133 310h1v9h-1zM139 310h1v9h-1zM157 310h1v9h-1zM169 310h1v9h-1zM171 310h1v9h-1zM173 310h1v9h-1zM176 310h1v9h-1zM185 310h1v9h-1zM188 310h1v9h-1zM219 310h1v9h-1zM221 310h1v9h-1zM224 310h1v9h-1zM225 310h1v9h-1zM226 310h1v9h-1zM230 310h1v9h-1zM241 310h1v9h-1zM259 310h1v9h-1zM260 310h1v9h-1zM261 310h1v9h-1zM262 310h1v9h-1zM285 310h1v9h-1zM286 310h1v9h-1zM294 310h1v9h-1zM297 310h1v9h-1zM311 310h1v9h-1zM312 310h1v9h-1zM313 310h1v9h-1zM316 310h1v9h-1zM317 310h1v9h-1zM322 310h1v9h-1zM326 310h1v9h-1zM331 310h1v9h-1zM334 310h1v9h-1zM335 310h1v9h-1zM346 310h1v9h-1zM348 310h1v9h-1zM351 310h1v9h-1zM354 310h1v9h-1zM369 310h1v9h-1zM373 310h1v9h-1zM376 310h1v9h-1zM382 310h1v9h-1zM383 310h1v9h-1zM386 310h1v9h-1zM387 310h1v9h-1zM389 310h1v9h-1zM398 310h1v9h-1zM399 310h1v9h-1zM400 310h1v9h-1zM401 310h1v9h-1zM405 310h1v9h-1zM411 310h1v9h-1zM412 310h1v9h-1zM419 310h1v9h-1zM421 310h1v9h-1zM426 310h1v9h-1zM427 310h1v9h-1zM429 310h1v9h-1zM432 310h1v9h-1zM433 310h1v9h-1zM437 310h1v9h-1zM438 310h1v9h-1zM446 310h1v9h-1zM450 310h1v9h-1zM452 310h1v9h-1zM456 310h1v9h-1zM458 310h1v9h-1zM459 310h1v9h-1zM464 310h1v9h-1zM466 310h1v9h-1zM467 310h1v9h-1zM468 310h1v9h-1zM471 310h1v9h-1zM475 310h1v9h-1zM476 310h1v9h-1zM477 310h1v9h-1zM478 310h1v9h-1zM483 310h1v9h-1zM486 310h1v9h-1zM487 310h1v9h-1zM493 310h1v9h-1zM498 310h1v9h-1zM499 310h1v9h-1zM500 310h1v9h-1zM506 310h1v9h-1zM507 310h1v9h-1zM508 310h1v9h-1zM509 310h1v9h-1zM510 310h1v9h-1zM511 310h1v9h-1zM512 310h1v9h-1zM513 310h1v9h-1zM514 310h1v9h-1zM515 310h1v9h-1zM516 310h1v9h-1zM522 310h1v9h-1zM525 310h1v9h-1zM538 310h1v9h-1zM539 310h1v9h-1zM540 310h1v9h-1zM541 310h1v9h-1zM542 310h1v9h-1zM548 310h1v9h-1zM554 310h1v9h-1zM555 310h1v9h-1zM556 310h1v9h-1zM560 310h1v9h-1zM566 310h1v9h-1zM572 310h1v9h-1zM574 310h1v9h-1zM576 310h1v9h-1zM579 310h1v9h-1zM580 310h1v9h-1zM581 310h1v9h-1zM582 310h1v9h-1zM584 310h1v9h-1zM587 310h1v9h-1zM588 310h1v9h-1zM590 310h1v9h-1zM592 310h1v9h-1zM595 310h1v9h-1zM597 310h1v9h-1zM600 310h1v9h-1zM601 310h1v9h-1zM603 310h1v9h-1zM604 310h1v9h-1zM607 310h1v9h-1zM610 310h1v9h-1zM611 310h1v9h-1zM612 310h1v9h-1zM618 310h1v9h-1zM622 310h1v9h-1zM623 310h1v9h-1zM624 310h1v9h-1zM625 310h1v9h-1zM626 310h1v9h-1zM629 310h1v9h-1zM630 310h1v9h-1zM632 310h1v9h-1zM633 310h1v9h-1zM634 310h1v9h-1zM635 310h1v9h-1zM636 310h1v9h-1zM640 310h1v9h-1zM642 310h1v9h-1zM643 310h1v9h-1zM644 310h1v9h-1zM645 310h1v9h-1zM650 310h1v9h-1zM651 310h1v9h-1zM652 310h1v9h-1zM653 310h1v9h-1zM654 310h1v9h-1zM655 310h1v9h-1zM656 310h1v9h-1zM657 310h1v9h-1zM658 310h1v9h-1zM661 310h1v9h-1zM662 310h1v9h-1zM663 310h1v9h-1zM664 310h1v9h-1zM672 310h1v9h-1zM678 310h1v9h-1zM681 310h1v9h-1zM682 310h1v9h-1zM683 310h1v9h-1zM685 310h1v9h-1zM689 310h1v9h-1zM690 310h1v9h-1zM691 310h1v9h-1zM693 310h1v9h-1zM694 310h1v9h-1zM697 310h1v9h-1zM699 310h1v9h-1zM701 310h1v9h-1zM702 310h1v9h-1zM703 310h1v9h-1zM704 310h1v9h-1zM705 310h1v9h-1z"/>
<path fill="#00c000" d="M45 296h1v23h-1zM53 296h1v23h-1zM57 296h1v23h-1zM59 296h1v23h-1zM248 296h1v23h-1zM412 296h1v23h-1zM476 296h1v23h-1zM513 296h1v23h-1zM590 296h1v23h-1zM611 296h1v23h-1zM636 296h1v23h-1zM650 290h1v29h-1zM652 296h1v23h-1zM654 296h1v23h-1zM661 296h1v23h-1zM662 296h1v23h-1zM663 296h1v23h-1zM664 296h1v23h-1zM675 296h1v23h-1z"/>
<line x1="45" y1="198.5" x2="753" y2="198.5" stroke="#808080" stroke-dasharray="1 2"/>
<line x1="45" y1="202.5" x2="753" y2="202.5" stroke="#808080" stroke-dasharray="1 2"/>
<line x1="45" y1="207.5" x2="753" y2="207.5" stroke="#808080" stroke-dasharray="1 2"/>
<line x1="45" y1="214.5" x2="753" y2="214.5" stroke="#808080" stroke-dasharray="1 2"/>
<line x1="45" y1="227.5" x2="753" y2="227.5" stroke="#808080" stroke-dasharray="1 2"/>
<line x1="45" y1="239.5" x2="753" y2="239.5" stroke="#808080" stroke-dasharray="1 2"/>
<line x1="45" y1="243.5" x2="753" y2="243.5" stroke="#808080" stroke-dasharray="1 2"/>
<line x1="45" y1="248.5" x2="753" y2="248.5" stroke="#808080" stroke-dasharray="1 2"/>
<line x1="45" y1="255.5" x2="753" y2="255.5" stroke="#808080" stroke-dasharray="1 2"/>
<line x1="45" y1="268.5" x2="753" y2="268.5" stroke="#808080" stroke-dasharray="1 2"/>
<line x1="45" y1="280.5" x2="753" y2="280.5" stroke="#808080" stroke-dasharray="1 2"/>
<line x1="45" y1="289.5" x2="753" y2="289.5" stroke="#808080" stroke-dasharray="1 2"/>
<line x1="45" y1="296.5" x2="753" y2="296.5" stroke="#808080" stroke-dasharray="1 2"/>
<line x1="45" y1="309.5" x2="753" y2="309.5" stroke="#808080" stroke-dasharray="1 2"/>
<line x1="115.5" y1="189" x2="115.5" y2="319" stroke="#808080" stroke-dasharray="1 2"/>
<line x1="186.5" y1="189" x2="186.5" y2="319" stroke="#808080" stroke-dasharray="1 2"/>
<line x1="257.5" y1="189" x2="257.5" y2="319" stroke="#808080" stroke-dasharray="1 2"/>
<line x1="328.5" y1="189" x2="328.5" y2="319" stroke="#808080" stroke-dasharray="1 2"/>
<line x1="399.5" y1="189" x2="399.5" y2="319" stroke="#808080" stroke-dasharray="1 2"/>
<line x1="470.5" y1="189" x2="470.5" y2="319" stroke="#808080" stroke-dasharray="1 2"/>
<line x1="541.5" y1="189" x2="541.5" y2="319" stroke="#808080" stroke-dasharray="1 2"/>
<line x1="612.5" y1="189" x2="612.5" y2="319" stroke="#808080" stroke-dasharray="1 2"/>
<line x1="683.5" y1="189" x2="683.5" y2="319" stroke="#808080" stroke-dasharray="1 2"/>
<line x1="45" y1="208.5" x2="753" y2="208.5" stroke="#ff0000" stroke-dasharray="1 2"/>
<line x1="45" y1="284.5" x2="753" y2="284.5" stroke="#ff0000" stroke-dasharray="1 2"/>
<line x1="706.5" y1="189" x2="706.5" y2="319" stroke="#000" stroke-dasharray="1 2"/>
<text x="41.4" y="203" text-anchor="end" textLength="17.7" lengthAdjust="spacingAndGlyphs">500</text>
<text x="41.4" y="219" text-anchor="end" textLength="17.7" lengthAdjust="spacingAndGlyphs">200</text>
<text x="41.4" y="232" text-anchor="end" textLength="17.7" lengthAdjust="spacingAndGlyphs">100</text>
<text x="41.4" y="244" text-anchor="end" textLength="11.8" lengthAdjust="spacingAndGlyphs">50</text>
<text x="41.4" y="260" text-anchor="end" textLength="11.8" lengthAdjust="spacingAndGlyphs">20</text>
<text x="41.4" y="273" text-anchor="end" textLength="11.8" lengthAdjust="spacingAndGlyphs">10</text>
<text x="41.4" y="285" text-anchor="end" textLength="5.9" lengthAdjust="spacingAndGlyphs">5</text>
<text x="41.4" y="301" text-anchor="end" textLength="5.9" lengthAdjust="spacingAndGlyphs">2</text>
<text x="41.4" y="314" text-anchor="end" textLength="5.9" lengthAdjust="spacingAndGlyphs">1</text>
<text x="49.3" y="204.8" font-size="14" textLength="26" lengthAdjust="spacingAndGlyphs">LDC</text>
<text x="186.3" y="334" text-anchor="middle" textLength="22" lengthAdjust="spacingAndGlyphs">5 GB</text>
<text x="328.3" y="334" text-anchor="middle" textLength="28" lengthAdjust="spacingAndGlyphs">10 GB</text>
<text x="470.3" y="334" text-anchor="middle" textLength="28" lengthAdjust="spacingAndGlyphs">15 GB</text>
<text x="612.3" y="334" text-anchor="middle" textLength="28" lengthAdjust="spacingAndGlyphs">20 GB</text>
<rect x="44.5" y="340.5" width="709" height="132" fill="#fff" stroke="#a0a0a0"/>
<path fill="#0050ff" d="M45 449h1v23h-1zM46 449h1v23h-1zM47 449h1v23h-1zM48 449h1v23h-1zM49 449h1v23h-1zM50 442h1v30h-1zM51 442h1v30h-1zM52 449h1v23h-1zM53 449h1v23h-1zM54 449h1v23h-1zM55 449h1v23h-1zM56 449h1v23h-1zM57 449h1v23h-1zM58 449h1v23h-1zM59 449h1v23h-1zM60 449h1v23h-1zM61 449h1v23h-1zM62 449h1v23h-1zM63 449h1v23h-1zM64 449h1v23h-1zM65 449h1v23h-1zM66 442h1v30h-1zM67 442h1v30h-1zM68 449h1v23h-1zM69 449h1v23h-1zM70 449h1v23h-1zM71 442h1v30h-1zM72 449h1v23h-1zM73 449h1v23h-1zM74 449h1v23h-1zM75 449h1v23h-1zM76 449h1v23h-1zM77 449h1v23h-1zM78 442h1v30h-1zM79 449h1v23h-1zM80 449h1v23h-1zM81 449h1v23h-1zM82 449h1v23h-1zM83 449h1v23h-1zM84 449h1v23h-1zM85 449h1v23h-1zM86 449h1v23h-1zM87 449h1v23h-1zM88 449h1v23h-1zM89 449h1v23h-1zM90 449h1v23h-1zM91 449h1v23h-1zM92 449h1v23h-1zM93 449h1v23h-1zM94 449h1v23h-1zM95 449h1v23h-1zM96 442h1v30h-1zM97 449h1v23h-1zM98 449h1v23h-1zM99 437h1v35h-1zM100 442h1v30h-1zM101 449h1v23h-1zM102 449h1v23h-1zM103 449h1v23h-1zM104 449h1v23h-1zM105 449h1v23h-1zM106 449h1v23h-1zM107 449h1v23h-1zM108 433h1v39h-1zM109 430h1v42h-1zM110 449h1v23h-1zM111 449h1v23h-1zM112 449h1v23h-1zM113 449h1v23h-1zM114 449h1v23h-1zM115 442h1v30h-1zM116 449h1v23h-1zM117 449h1v23h-1zM118 449h1v23h-1zM119 449h1v23h-1zM120 449h1v23h-1zM121 437h1v35h-1zM122 449h1v23h-1zM123 433h1v39h-1zM124 433h1v39h-1zM125 449h1v23h-1zM126 449h1v23h-1zM127 449h1v23h-1zM128 442h1v30h-1zM129 449h1v23h-1zM130 449h1v23h-1zM131 449h1v23h-1zM132 449h1v23h-1zM133 449h1v23h-1zM134 449h1v23h-1zM135 442h1v30h-1zM136 449h1v23h-1zM137 449h1v23h-1zM138 449h1v23h-1zM139 449h1v23h-1zM140 449h1v23h-1zM141 442h1v30h-1zM142 449h1v23h-1zM143 449h1v23h-1zM144 442h1v30h-1zM145 449h1v23h-1zM146 449h1v23h-1zM147 449h1v23h-1zM148 449h1v23h-1zM149 449h1v23h-1zM150 449h1v23h-1zM151 449h1v23h-1zM152 442h1v30h-1zM153 449h1v23h-1zM154 449h1v23h-1zM155 449h1v23h-1zM156 449h1v23h-1zM157 449h1v23h-1zM158 449h1v23h-1zM159 449h1v23h-1zM160 449h1v23h-1zM161 449h1v23h-1zM162 449h1v23h-1zM163 449h1v23h-1zM164 449h1v23h-1zM165 449h1v23h-1zM166 449h1v23h-1zM167 449h1v23h-1zM168 449h1v23h-1zM169 449h1v23h-1zM170 449h1v23h-1zM171 449h1v23h-1zM172 449h1v23h-1zM173 449h1v23h-1zM174 449h1v23h-1zM175 449h1v23h-1zM176 449h1v23h-1zM177 442h1v30h-1zM178 437h1v35h-1zM179 442h1v30h-1zM180 442h1v30h-1zM181 442h1v30h-1zM182 449h1v23h-1zM183 449h1v23h-1zM184 449h1v23h-1zM185 449h1v23h-1zM186 442h1v30h-1zM187 449h1v23h-1zM188 449h1v23h-1zM189 442h1v30h-1zM190 449h1v23h-1zM191 449h1v23h-1zM192 442h1v30h-1zM193 449h1v23h-1zM194 449h1v23h-1zM195 449h1v23h-1zM196 442h1v30h-1zM197 449h1v23h-1zM198 449h1v23h-1zM199 449h1v23h-1zM200 449h1v23h-1zM201 449h1v23h-1zM202 442h1v30h-1zM203 449h1v23h-1zM204 449h1v23h-1zM205 449h1v23h-1zM206 442h1v30h-1zM207 442h1v30h-1zM208 442h1v30h-1zM209 449h1v23h-1zM210 442h1v30h-1zM211 437h1v35h-1zM212 449h1v23h-1zM213 449h1v23h-1zM214 449h1v23h-1zM215 442h1v30h-1zM216 449h1v23h-1zM217 449h1v23h-1zM218 449h1v23h-1zM219 449h1v23h-1zM220 449h1v23h-1zM221 449h1v23h-1zM222 449h1v23h-1zM223 421h1v51h-1zM224 449h1v23h-1zM225 449h1v23h-1zM226 449h1v23h-1zM227 449h1v23h-1zM228 449h1v23h-1zM229 449h1v23h-1zM230 449h1v23h-1zM231 449h1v23h-1zM232 449h1v23h-1zM233 449h1v23h-1zM234 449h1v23h-1zM235 449h1v23h-1zM236 449h1v23h-1zM237 449h1v23h-1zM238 449h1v23h-1zM239 442h1v30h-1zM240 449h1v23h-1zM241 449h1v23h-1zM242 449h1v23h-1zM243 449h1v23h-1zM244 442h1v30h-1zM245 449h1v23h-1zM246 449h1v23h-1zM247 449h1v23h-1zM248 449h1v23h-1zM249 449h1v23h-1zM250 430h1v42h-1zM251 430h1v42h-1zM252 449h1v23h-1zM253 449h1v23h-1zM254 449h1v23h-1zM255 449h1v23h-1zM256 449h1v23h-1zM257 449h1v23h-1zM258 449h1v23h-1zM259 449h1v23h-1zM260 449h1v23h-1zM261 449h1v23h-1zM262 449h1v23h-1zM263 449h1v23h-1zM264 442h1v30h-1zM265 449h1v23h-1zM266 449h1v23h-1zM267 449h1v23h-1zM268 449h1v23h-1zM269 449h1v23h-1zM270 449h1v23h-1zM271 449h1v23h-1zM272 449h1v23h-1zM273 449h1v23h-1zM274 449h1v23h-1zM275 449h1v23h-1zM276 449h1v23h-1zM277 449h1v23h-1zM278 449h1v23h-1zM279 449h1v23h-1zM280 449h1v23h-1zM281 449h1v23h-1zM282 449h1v23h-1zM283 449h1v23h-1zM284 449h1v23h-1zM285 442h1v30h-1zM286 449h1v23h-1zM287 449h1v23h-1zM288 449h1v23h-1zM289 442h1v30h-1zM290 449h1v23h-1zM291 449h1v23h-1zM292 449h1v23h-1zM293 449h1v23h-1zM294 449h1v23h-1zM295 449h1v23h-1zM296 449h1v23h-1zM297 449h1v23h-1zM298 449h1v23h-1zM299 449h1v23h-1zM300 449h1v23h-1zM301 449h1v23h-1zM302 449h1v23h-1zM303 449h1v23h-1zM304 449h1v23h-1zM305 449h1v23h-1zM306 449h1v23h-1zM307 442h1v30h-1zM308 449h1v23h-1zM309 449h1v23h-1zM310 449h1v23h-1zM311 442h1v30h-1zM312 449h1v23h-1zM313 449h1v23h-1zM314 449h1v23h-1zM315 449h1v23h-1zM316 449h1v23h-1zM317 449h1v23h-1zM318 449h1v23h-1zM319 449h1v23h-1zM320 449h1v23h-1zM321 449h1v23h-1zM322 449h1v23h-1zM323 449h1v23h-1zM324 449h1v23h-1zM325 442h1v30h-1zM326 449h1v23h-1zM327 449h1v23h-1zM328 442h1v30h-1zM329 449h1v23h-1zM330 449h1v23h-1zM331 449h1v23h-1zM332 449h1v23h-1zM333 442h1v30h-1zM334 449h1v23h-1zM335 449h1v23h-1zM336 442h1v30h-1zM337 449h1v23h-1zM338 449h1v23h-1zM339 449h1v23h-1zM340 442h1v30h-1zM341 449h1v23h-1zM342 442h1v30h-1zM343 449h1v23h-1zM344 449h1v23h-1zM345 442h1v30h-1zM346 442h1v30h-1zM347 442h1v30h-1zM348 449h1v23h-1zM349 442h1v30h-1zM350 449h1v23h-1zM351 449h1v23h-1zM352 449h1v23h-1zM353 449h1v23h-1zM354 449h1v23h-1zM355 449h1v23h-1zM356 449h1v23h-1zM357 449h1v23h-1zM358 449h1v23h-1zM359 449h1v23h-1zM360 449h1v23h-1zM361 449h1v23h-1zM362 449h1v23h-1zM363 449h1v23h-1zM364 449h1v23h-1zM365 442h1v30h-1zM366 442h1v30h-1zM367 449h1v23h-1zM368 449h1v23h-1zM369 442h1v30h-1zM370 449h1v23h-1zM371 449h1v23h-1zM372 442h1v30h-1zM373 449h1v23h-1zM374 449h1v23h-1zM375 442h1v30h-1zM376 449h1v23h-1zM377 442h1v30h-1zM378 449h1v23h-1zM379 449h1v23h-1zM380 449h1v23h-1zM381 449h1v23h-1zM382 449h1v23h-1zM383 449h1v23h-1zM384 449h1v23h-1zM385 449h1v23h-1zM386 449h1v23h-1zM387 449h1v23h-1zM388 449h1v23h-1zM389 449h1v23h-1zM390 449h1v23h-1zM391 449h1v23h-1zM392 449h1v23h-1zM393 449h1v23h-1zM394 449h1v23h-1zM395 449h1v23h-1zM396 449h1v23h-1zM397 449h1v23h-1zM398 449h1v23h-1zM399 449h1v23h-1zM400 449h1v23h-1zM401 449h1v23h-1zM402 449h1v23h-1zM403 442h1v30h-1zM404 442h1v30h-1zM405 442h1v30h-1zM406 449h1v23h-1zM407 449h1v23h-1zM408 449h1v23h-1zM409 449h1v23h-1zM410 449h1v23h-1zM411 449h1v23h-1zM412 449h1v23h-1zM413 449h1v23h-1zM414 449h1v23h-1zM415 449h1v23h-1zM416 442h1v30h-1zM417 449h1v23h-1zM418 449h1v23h-1zM419 449h1v23h-1zM420 449h1v23h-1zM421 449h1v23h-1zM422 449h1v23h-1zM423 449h1v23h-1zM424 449h1v23h-1zM425 442h1v30h-1zM426 449h1v23h-1zM427 449h1v23h-1zM428 442h1v30h-1zM429 449h1v23h-1zM430 449h1v23h-1zM431 449h1v23h-1zM432 449h1v23h-1zM433 449h1v23h-1zM434 449h1v23h-1zM435 449h1v23h-1zM436 449h1v23h-1zM437 449h1v23h-1zM438 449h1v23h-1zM439 442h1v30h-1zM440 442h1v30h-1zM441 442h1v30h-1zM442 449h1v23h-1zM443 449h1v23h-1zM444 449h1v23h-1zM445 449h1v23h-1zM446 449h1v23h-1zM447 449h1v23h-1zM448 449h1v23h-1zM449 449h1v23h-1zM450 449h1v23h-1zM451 449h1v23h-1zM452 449h1v23h-1zM453 449h1v23h-1zM454 449h1v23h-1zM455 442h1v30h-1zM456 449h1v23h-1zM457 449h1v23h-1zM458 449h1v23h-1zM459 449h1v23h-1zM460 449h1v23h-1zM461 449h1v23h-1zM462 449h1v23h-1zM463 449h1v23h-1zM464 449h1v23h-1zM465 449h1v23h-1zM466 449h1v23h-1zM467 449h1v23h-1zM468 449h1v23h-1zM469 449h1v23h-1zM470 442h1v30h-1zM471 449h1v23h-1zM472 449h1v23h-1zM473 442h1v30h-1zM474 449h1v23h-1zM475 449h1v23h-1zM476 442h1v30h-1zM477 442h1v30h-1zM478 442h1v30h-1zM479 449h1v23h-1zM480 449h1v23h-1zM481 449h1v23h-1zM482 442h1v30h-1zM483 449h1v23h-1zM484 449h1v23h-1zM485 442h1v30h-1zM486 442h1v30h-1zM487 449h1v23h-1zM488 449h1v23h-1zM489 449h1v23h-1zM490 442h1v30h-1zM491 449h1v23h-1zM492 442h1v30h-1zM493 449h1v23h-1zM494 449h1v23h-1zM495 442h1v30h-1zM496 449h1v23h-1zM497 449h1v23h-1zM498 449h1v23h-1zM499 442h1v30h-1zM500 449h1v23h-1zM501 449h1v23h-1zM502 449h1v23h-1zM503 437h1v35h-1zM504 437h1v35h-1zM505 442h1v30h-1zM506 449h1v23h-1zM507 449h1v23h-1zM508 449h1v23h-1zM509 449h1v23h-1zM510 449h1v23h-1zM511 449h1v23h-1zM512 449h1v23h-1zM513 449h1v23h-1zM514 449h1v23h-1zM515 449h1v23h-1zM516 449h1v23h-1zM517 449h1v23h-1zM518 442h1v30h-1zM519 449h1v23h-1zM520 449h1v23h-1zM521 449h1v23h-1zM522 449h1v23h-1zM523 442h1v30h-1zM524 449h1v23h-1zM525 449h1v23h-1zM526 449h1v23h-1zM527 449h1v23h-1zM528 449h1v23h-1zM529 449h1v23h-1zM530 449h1v23h-1zM531 449h1v23h-1zM532 437h1v35h-1zM533 421h1v51h-1zM534 430h1v42h-1zM535 449h1v23h-1zM536 449h1v23h-1zM537 442h1v30h-1zM538 442h1v30h-1zM539 449h1v23h-1zM540 449h1v23h-1zM541 442h1v30h-1zM542 449h1v23h-1zM543 449h1v23h-1zM544 449h1v23h-1zM545 449h1v23h-1zM546 449h1v23h-1zM547 449h1v23h-1zM548 449h1v23h-1zM549 449h1v23h-1zM550 449h1v23h-1zM551 442h1v30h-1zM552 449h1v23h-1zM553 449h1v23h-1zM554 449h1v23h-1zM555 449h1v23h-1zM556 449h1v23h-1zM557 449h1v23h-1zM558 442h1v30h-1zM559 442h1v30h-1zM560 449h1v23h-1zM561 449h1v23h-1zM562 449h1v23h-1zM563 442h1v30h-1zM564 437h1v35h-1zM565 442h1v30h-1zM566 449h1v23h-1zM567 449h1v23h-1zM568 449h1v23h-1zM569 442h1v30h-1zM570 442h1v30h-1zM571 449h1v23h-1zM572 449h1v23h-1zM573 449h1v23h-1zM574 449h1v23h-1zM575 449h1v23h-1zM576 449h1v23h-1zM577 449h1v23h-1zM578 449h1v23h-1zM579 449h1v23h-1zM580 449h1v23h-1zM581 449h1v23h-1zM582 449h1v23h-1zM583 442h1v30h-1zM584 449h1v23h-1zM585 442h1v30h-1zM586 449h1v23h-1zM587 449h1v23h-1zM588 449h1v23h-1zM589 449h1v23h-1zM590 449h1v23h-1zM591 449h1v23h-1zM592 449h1v23h-1zM593 442h1v30h-1zM594 442h1v30h-1zM595 449h1v23h-1zM596 449h1v23h-1zM597 449h1v23h-1zM598 449h1v23h-1zM599 449h1v23h-1zM600 449h1v23h-1zM601 442h1v30h-1zM602 442h1v30h-1zM603 442h1v30h-1zM604 449h1v23h-1zM605 449h1v23h-1zM606 449h1v23h-1zM607 449h1v23h-1zM608 449h1v23h-1zM609 442h1v30h-1zM610 449h1v23h-1zM611 449h1v23h-1zM612 449h1v23h-1zM613 449h1v23h-1zM614 427h1v45h-1zM615 427h1v45h-1zM616 437h1v35h-1zM617 437h1v35h-1zM618 442h1v30h-1zM619 449h1v23h-1zM620 449h1v23h-1zM621 449h1v23h-1zM622 449h1v23h-1zM623 449h1v23h-1zM624 442h1v30h-1zM625 449h1v23h-1zM626 449h1v23h-1zM627 430h1v42h-1zM628 427h1v45h-1zM629 449h1v23h-1zM630 449h1v23h-1zM631 449h1v23h-1zM632 449h1v23h-1zM633 449h1v23h-1zM634 449h1v23h-1zM635 449h1v23h-1zM636 437h1v35h-1zM637 449h1v23h-1zM638 442h1v30h-1zM639 442h1v30h-1zM640 449h1v23h-1zM641 442h1v30h-1zM642 442h1v30h-1zM643 449h1v23h-1zM644 449h1v23h-1zM645 449h1v23h-1zM646 442h1v30h-1zM647 442h1v30h-1zM648 437h1v35h-1zM649 442h1v30h-1zM650 442h1v30h-1zM651 442h1v30h-1zM652 442h1v30h-1zM653 442h1v30h-1zM654 442h1v30h-1zM655 449h1v23h-1zM656 449h1v23h-1zM657 437h1v35h-1zM658 437h1v35h-1zM659 427h1v45h-1zM660 427h1v45h-1zM661 425h1v47h-1zM662 449h1v23h-1zM663 449h1v23h-1zM664 425h1v47h-1zM665 427h1v45h-1zM666 427h1v45h-1zM667 430h1v42h-1zM668 430h1v42h-1zM669 442h1v30h-1zM670 449h1v23h-1zM671 449h1v23h-1zM672 449h1v23h-1zM673 449h1v23h-1zM674 449h1v23h-1zM675 449h1v23h-1zM676 449h1v23h-1zM677 442h1v30h-1zM678 442h1v30h-1zM679 437h1v35h-1zM680 449h1v23h-1zM681 449h1v23h-1zM682 449h1v23h-1zM683 449h1v23h-1zM684 449h1v23h-1zM685 449h1v23h-1zM686 442h1v30h-1zM687 442h1v30h-1zM688 442h1v30h-1zM689 442h1v30h-1zM690 442h1v30h-1zM691 442h1v30h-1zM692 449h1v23h-1zM693 449h1v23h-1zM694 449h1v23h-1zM695 449h1v23h-1zM696 442h1v30h-1zM697 449h1v23h-1zM698 449h1v23h-1zM699 442h1v30h-1zM700 442h1v30h-1zM701 442h1v30h-1zM702 449h1v23h-1zM703 449h1v23h-1zM704 442h1v30h-1zM705 449h1v23h-1z"/>
<path fill="#ffffff" d="M64 449h1v13h-1zM105 449h1v13h-1zM116 449h1v13h-1zM122 449h1v13h-1zM126 449h1v13h-1zM131 449h1v13h-1zM149 449h1v13h-1zM153 449h1v13h-1zM159 449h1v13h-1zM173 449h1v13h-1zM174 449h1v13h-1zM175 449h1v13h-1zM176 449h1v13h-1zM183 449h1v13h-1zM187 449h1v13h-1zM195 449h1v13h-1zM217 449h1v13h-1zM230 449h1v13h-1zM295 449h1v13h-1zM309 449h1v13h-1zM317 449h1v13h-1zM322 449h1v13h-1zM335 449h1v13h-1zM348 449h1v13h-1zM356 449h1v13h-1zM362 449h1v13h-1zM364 449h1v13h-1zM374 449h1v13h-1zM384 449h1v13h-1zM388 449h1v13h-1zM399 449h1v13h-1zM408 449h1v13h-1zM411 449h1v13h-1zM424 449h1v13h-1zM426 449h1v13h-1zM445 449h1v13h-1zM450 449h1v13h-1zM471 449h1v13h-1zM480 449h1v13h-1zM522 449h1v13h-1zM539 449h1v13h-1zM542 449h1v13h-1zM578 449h1v13h-1zM584 449h1v13h-1zM590 449h1v13h-1zM637 449h1v13h-1zM683 449h1v13h-1zM697 449h1v13h-1z"/>
<path fill="#002070" d="M108 462h1v10h-1zM123 462h1v10h-1zM124 462h1v10h-1zM250 462h1v10h-1zM251 462h1v10h-1zM504 462h1v10h-1zM532 462h1v10h-1zM533 462h1v10h-1zM534 462h1v10h-1zM614 462h1v10h-1zM615 462h1v10h-1zM616 462h1v10h-1zM627 462h1v10h-1zM628 462h1v10h-1zM659 462h1v10h-1zM660 462h1v10h-1zM665 462h1v10h-1zM666 462h1v10h-1zM667 462h1v10h-1z"/>
<line x1="45" y1="351.5" x2="753" y2="351.5" stroke="#808080" stroke-dasharray="1 2"/>
<line x1="45" y1="355.5" x2="753" y2="355.5" stroke="#808080" stroke-dasharray="1 2"/>
<line x1="45" y1="360.5" x2="753" y2="360.5" stroke="#808080" stroke-dasharray="1 2"/>
<line x1="45" y1="367.5" x2="753" y2="367.5" stroke="#808080" stroke-dasharray="1 2"/>
<line x1="45" y1="380.5" x2="753" y2="380.5" stroke="#808080" stroke-dasharray="1 2"/>
<line x1="45" y1="392.5" x2="753" y2="392.5" stroke="#808080" stroke-dasharray="1 2"/>
<line x1="45" y1="396.5" x2="753" y2="396.5" stroke="#808080" stroke-dasharray="1 2"/>
<line x1="45" y1="401.5" x2="753" y2="401.5" stroke="#808080" stroke-dasharray="1 2"/>
<line x1="45" y1="408.5" x2="753" y2="408.5" stroke="#808080" stroke-dasharray="1 2"/>
<line x1="45" y1="421.5" x2="753" y2="421.5" stroke="#808080" stroke-dasharray="1 2"/>
<line x1="45" y1="433.5" x2="753" y2="433.5" stroke="#808080" stroke-dasharray="1 2"/>
<line x1="45" y1="442.5" x2="753" y2="442.5" stroke="#808080" stroke-dasharray="1 2"/>
<line x1="45" y1="449.5" x2="753" y2="449.5" stroke="#808080" stroke-dasharray="1 2"/>
<line x1="45" y1="462.5" x2="753" y2="462.5" stroke="#808080" stroke-dasharray="1 2"/>
<line x1="115.5" y1="342" x2="115.5" y2="472" stroke="#808080" stroke-dasharray="1 2"/>
<line x1="186.5" y1="342" x2="186.5" y2="472" stroke="#808080" stroke-dasharray="1 2"/>
<line x1="257.5" y1="342" x2="257.5" y2="472" stroke="#808080" stroke-dasharray="1 2"/>
<line x1="328.5" y1="342" x2="328.5" y2="472" stroke="#808080" stroke-dasharray="1 2"/>
<line x1="399.5" y1="342" x2="399.5" y2="472" stroke="#808080" stroke-dasharray="1 2"/>
<line x1="470.5" y1="342" x2="470.5" y2="472" stroke="#808080" stroke-dasharray="1 2"/>
<line x1="541.5" y1="342" x2="541.5" y2="472" stroke="#808080" stroke-dasharray="1 2"/>
<line x1="612.5" y1="342" x2="612.5" y2="472" stroke="#808080" stroke-dasharray="1 2"/>
<line x1="683.5" y1="342" x2="683.5" y2="472" stroke="#808080" stroke-dasharray="1 2"/>
<line x1="45" y1="361.5" x2="753" y2="361.5" stroke="#ff0000" stroke-dasharray="1 2"/>
<line x1="45" y1="437.5" x2="753" y2="437.5" stroke="#ff0000" stroke-dasharray="1 2"/>
<line x1="706.5" y1="342" x2="706.5" y2="472" stroke="#000" stroke-dasharray="1 2"/>
<text x="41.4" y="356" text-anchor="end" textLength="17.7" lengthAdjust="spacingAndGlyphs">500</text>
<text x="41.4" y="372" text-anchor="end" textLength="17.7" lengthAdjust="spacingAndGlyphs">200</text>
<text x="41.4" y="385" text-anchor="end" textLength="17.7" lengthAdjust="spacingAndGlyphs">100</text>
<text x="41.4" y="397" text-anchor="end" textLength="11.8" lengthAdjust="spacingAndGlyphs">50</text>
<text x="41.4" y="413" text-anchor="end" textLength="11.8" lengthAdjust="spacingAndGlyphs">20</text>
<text x="41.4" y="426" text-anchor="end" textLength="11.8" lengthAdjust="spacingAndGlyphs">10</text>
<text x="41.4" y="438" text-anchor="end" textLength="5.9" lengthAdjust="spacingAndGlyphs">5</text>
<text x="41.4" y="454" text-anchor="end" textLength="5.9" lengthAdjust="spacingAndGlyphs">2</text>
<text x="41.4" y="467" text-anchor="end" textLength="5.9" lengthAdjust="spacingAndGlyphs">1</text>
<text x="49.5" y="357.8" font-size="14" textLength="6.6" lengthAdjust="spacingAndGlyphs">B</text>
<path shape-rendering="auto" d="M57.2 348h3.6v1.1h-3.6zM58.3 348h1.35v9.8h-1.35zM57.2 356.7h3.6v1.1h-3.6z" fill="#000"/>
<text x="61.3" y="357.8" font-size="14" textLength="7.6" lengthAdjust="spacingAndGlyphs">S</text>
<text x="186.3" y="487" text-anchor="middle" textLength="22" lengthAdjust="spacingAndGlyphs">5 GB</text>
<text x="328.3" y="487" text-anchor="middle" textLength="28" lengthAdjust="spacingAndGlyphs">10 GB</text>
<text x="470.3" y="487" text-anchor="middle" textLength="28" lengthAdjust="spacingAndGlyphs">15 GB</text>
<text x="612.3" y="487" text-anchor="middle" textLength="28" lengthAdjust="spacingAndGlyphs">20 GB</text>
</svg>
</div>
</body></html>
